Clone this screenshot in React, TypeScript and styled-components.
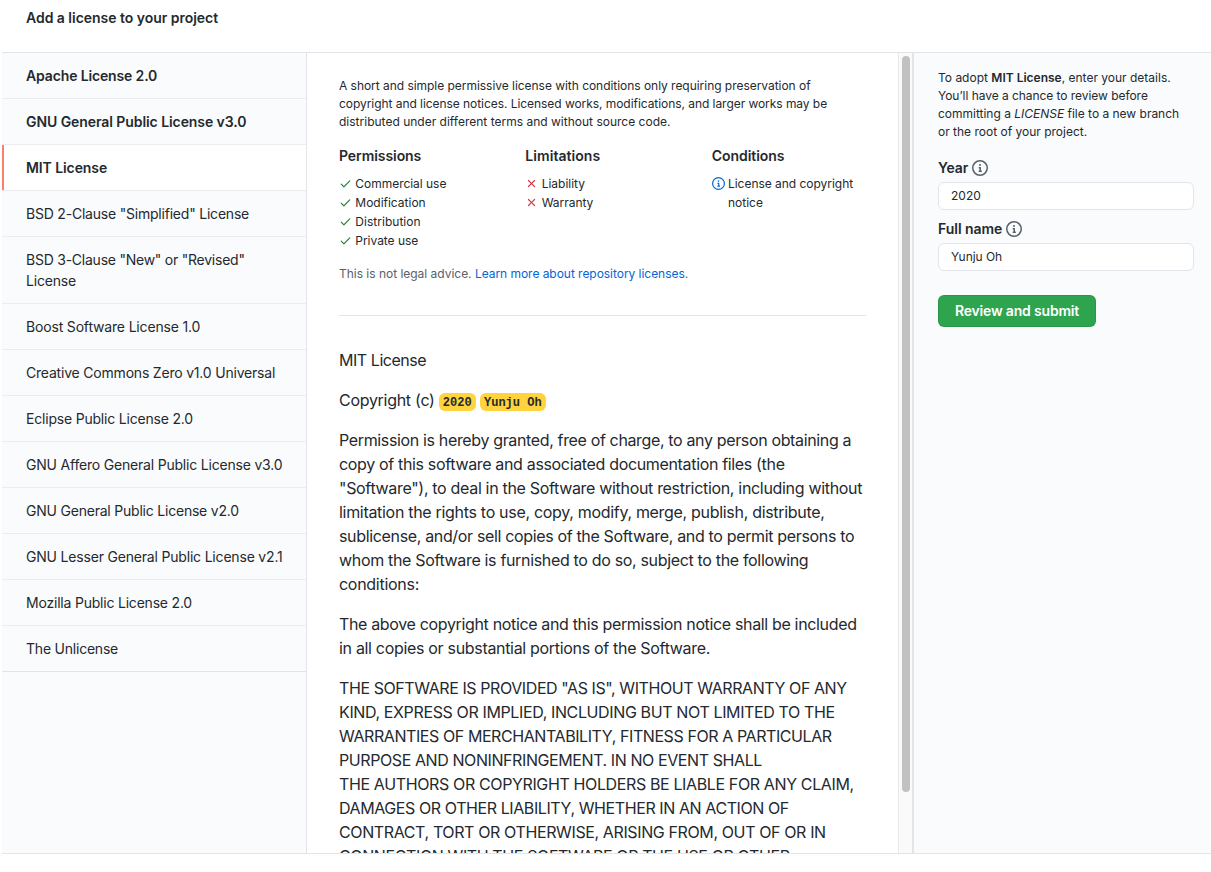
import React from "react";
import styled, { createGlobalStyle, css } from "styled-components";

const colors = {
  text: "#24292e",
  muted: "#586069",
  border: "#e1e4e8",
  subtle: "#fafbfc",
  link: "#0366d6",
  green: "#2ea44f",
  check: "#22863a",
  red: "#d73a49",
  accent: "#f9826c",
  mark: "#ffd33d",
};

const GlobalStyle = createGlobalStyle`
  *, *::before, *::after { box-sizing: border-box; }
  body {
    margin: 0;
    background: #fff;
    color: ${colors.text};
    font-family: Inter, "Liberation Sans", sans-serif;
    font-size: 14px;
    line-height: 21px;
  }
  h1, h2, p, ul { margin: 0; padding: 0; }
  ul { list-style: none; }
`;

/* Text run with its own tracking, in px. */
const Tracked = styled.span<{ $t?: number }>`
  letter-spacing: ${(p) => p.$t ?? 0}px;
`;

const Line = styled(Tracked)`
  display: block;
  white-space: nowrap;
`;

const Strong = styled.strong`
  font-weight: 600;
`;

const Page = styled.div`
  display: flex;
  flex-direction: column;
  height: 872px;
  padding-left: 2px;
  overflow: hidden;
`;

const Header = styled.header`
  height: 52px;
  padding: 7px 24px;
`;

const Title = styled.h1`
  font-size: 14px;
  line-height: 21px;
  font-weight: 600;
`;

const Columns = styled.div`
  display: flex;
  height: 802px;
  border-top: 1px solid ${colors.border};
  border-bottom: 1px solid ${colors.border};
`;

const Sidebar = styled.nav`
  width: 305px;
  flex: none;
  background: ${colors.subtle};
  border-right: 1px solid ${colors.border};
`;

const SidebarItem = styled.a<{ $strong?: boolean; $selected?: boolean }>`
  display: block;
  padding: 12px 20px 12px 24px;
  border-bottom: 1px solid #eaecef;
  font-weight: ${(p) => (p.$strong ? 600 : 400)};
  &:last-child {
    border-bottom-color: ${colors.border};
  }
  ${(p) =>
    p.$selected &&
    css`
      background: #fff;
      box-shadow: inset 2px 0 0 ${colors.accent};
    `}
`;

const Main = styled.main`
  flex: 1;
  min-width: 0;
  padding: 24px 32px 0;
  overflow: hidden;
`;

const Summary = styled.p`
  font-size: 12px;
  line-height: 18px;
`;

const Rules = styled.div`
  display: grid;
  grid-template-columns: repeat(3, 1fr);
  column-gap: 32px;
  margin-top: 15px;
`;

const RuleTitle = styled.h2`
  margin-bottom: 8px;
  font-size: 14px;
  line-height: 20px;
  font-weight: 600;
`;

const RuleItem = styled.li`
  display: flex;
  font-size: 12px;
  line-height: 19px;
`;

const RuleIcon = styled.span`
  display: flex;
  align-items: center;
  flex: none;
  width: 16.3px;
  height: 19px;
`;

const Advice = styled.p`
  margin-top: 15px;
  font-size: 12px;
  line-height: 18px;
  color: ${colors.muted};
`;

const Link = styled.a`
  color: ${colors.link};
`;

const Divider = styled.div`
  height: 1px;
  margin: 32px 0;
  background: ${colors.border};
`;

const LegalText = styled.div`
  display: flex;
  flex-direction: column;
  gap: 16px;
  font-size: 16px;
  line-height: 24px;
`;

const CopyrightLine = styled.p`
  display: flex;
  align-items: center;
  gap: 4px;
`;

const Mark = styled.span`
  height: 18px;
  margin-top: 4px;
  padding: 0 4.2px;
  border-radius: 6px;
  background: ${colors.mark};
  font: 700 12px/20px "Liberation Mono", monospace;
`;

const ScrollTrack = styled.div`
  width: 16px;
  flex: none;
  padding: 3px 3px 0;
  background: #fafafa;
  border-left: 1px solid #e8e8e8;
  border-right: 2px solid #e4e5e8;
`;

const ScrollThumb = styled.div`
  width: 8px;
  height: 736px;
  border-radius: 4px;
  background: #c1c1c1;
`;

const Details = styled.aside`
  width: 297px;
  flex: none;
  padding: 16px 17px 0 24px;
  background: ${colors.subtle};
`;

const Label = styled.label`
  display: flex;
  align-items: center;
  gap: 3.6px;
  height: 21px;
  margin-bottom: 4px;
  color: ${colors.text};
  font-weight: 600;
`;

const Field = styled.div<{ $top: number }>`
  margin-top: ${(p) => p.$top}px;
`;

const Input = styled.div`
  height: 28px;
  padding: 0 12px;
  border: 1px solid ${colors.border};
  border-radius: 6px;
  background: #fff;
  font-size: 12px;
  line-height: 26px;
`;

const SubmitButton = styled.button`
  width: 158px;
  height: 32px;
  margin-top: 24px;
  padding: 0;
  border: 1px solid rgba(27, 31, 35, 0.1);
  border-radius: 6px;
  background: ${colors.green};
  color: #fff;
  font-family: inherit;
  font-size: 14px;
  line-height: 20px;
  font-weight: 600;
  white-space: nowrap;
`;

const iconPaths = {
  check:
    "M13.78 4.22a.75.75 0 010 1.06l-7.25 7.25a.75.75 0 01-1.06 0L2.22 9.28a.75.75 0 011.06-1.06L6 10.94l6.72-6.72a.75.75 0 011.06 0z",
  x: "M3.72 3.72a.75.75 0 011.06 0L8 6.94l3.22-3.22a.75.75 0 111.06 1.06L9.06 8l3.22 3.22a.75.75 0 11-1.06 1.06L8 9.06l-3.22 3.22a.75.75 0 01-1.06-1.06L6.94 8 3.72 4.78a.75.75 0 010-1.06z",
  info: "M8 1.5a6.5 6.5 0 100 13 6.5 6.5 0 000-13zM0 8a8 8 0 1116 0A8 8 0 010 8zm6.5-.25A.75.75 0 017.25 7h1a.75.75 0 01.75.75v2.75h.25a.75.75 0 010 1.5h-2a.75.75 0 010-1.5h.25v-2h-.25a.75.75 0 01-.75-.75zM8 6a1 1 0 100-2 1 1 0 000 2z",
};

type IconName = keyof typeof iconPaths;

const Icon = ({ name, size, color }: { name: IconName; size: number; color: string }) => (
  <svg width={size} height={size} viewBox="0 0 16 16" fill={color} aria-hidden="true">
    <path fillRule="evenodd" d={iconPaths[name]} />
  </svg>
);

type TextLine = [text: string, tracking: number];

const licenses: { lines: TextLine[]; strong?: boolean; selected?: boolean }[] = [
  { lines: [["Apache License 2.0", -0.14]], strong: true },
  { lines: [["GNU General Public License v3.0", -0.075]], strong: true },
  { lines: [["MIT License", -0.09]], strong: true, selected: true },
  { lines: [['BSD 2-Clause "Simplified" License', -0.21]] },
  { lines: [['BSD 3-Clause "New" or "Revised"', -0.24], ["License", -0.2]] },
  { lines: [["Boost Software License 1.0", -0.17]] },
  { lines: [["Creative Commons Zero v1.0 Universal", -0.2]] },
  { lines: [["Eclipse Public License 2.0", -0.2]] },
  { lines: [["GNU Affero General Public License v3.0", -0.2]] },
  { lines: [["GNU General Public License v2.0", -0.215]] },
  { lines: [["GNU Lesser General Public License v2.1", -0.19]] },
  { lines: [["Mozilla Public License 2.0", -0.205]] },
  { lines: [["The Unlicense", -0.22]] },
];

const summary: TextLine[] = [
  ["A short and simple permissive license with conditions only requiring preservation of", -0.037],
  ["copyright and license notices. Licensed works, modifications, and larger works may be", -0.055],
  ["distributed under different terms and without source code.", 0.005],
];

const rules: { title: TextLine; icon: IconName; color: string; items: TextLine[][] }[] = [
  {
    title: ["Permissions", -0.07],
    icon: "check",
    color: colors.check,
    items: [
      [["Commercial use", -0.03]],
      [["Modification", -0.01]],
      [["Distribution", 0.03]],
      [["Private use", -0.03]],
    ],
  },
  {
    title: ["Limitations", 0.05],
    icon: "x",
    color: colors.red,
    items: [[["Liability", 0]], [["Warranty", -0.03]]],
  },
  {
    title: ["Conditions", -0.04],
    icon: "info",
    color: colors.link,
    items: [
      [
        ["License and copyright", -0.03],
        ["notice", 0],
      ],
    ],
  },
];

const paragraphs: TextLine[][] = [
  [
    ["Permission is hereby granted, free of charge, to any person obtaining a", -0.354],
    ["copy of this software and associated documentation files (the", -0.338],
    ['"Software"), to deal in the Software without restriction, including without', -0.318],
    ["limitation the rights to use, copy, modify, merge, publish, distribute,", -0.305],
    ["sublicense, and/or sell copies of the Software, and to permit persons to", -0.342],
    ["whom the Software is furnished to do so, subject to the following", -0.332],
    ["conditions:", -0.28],
  ],
  [
    ["The above copyright notice and this permission notice shall be included", -0.346],
    ["in all copies or substantial portions of the Software.", -0.315],
  ],
  [
    ['THE SOFTWARE IS PROVIDED "AS IS", WITHOUT WARRANTY OF ANY', -0.418],
    ["KIND, EXPRESS OR IMPLIED, INCLUDING BUT NOT LIMITED TO THE", -0.372],
    ["WARRANTIES OF MERCHANTABILITY, FITNESS FOR A PARTICULAR", -0.42],
    ["PURPOSE AND NONINFRINGEMENT. IN NO EVENT SHALL", -0.412],
    ["THE AUTHORS OR COPYRIGHT HOLDERS BE LIABLE FOR ANY CLAIM,", -0.37],
    ["DAMAGES OR OTHER LIABILITY, WHETHER IN AN ACTION OF", -0.412],
    ["CONTRACT, TORT OR OTHERWISE, ARISING FROM, OUT OF OR IN", -0.38],
    ["CONNECTION WITH THE SOFTWARE OR THE USE OR OTHER", -0.385],
  ],
];

const Lines = ({ lines }: { lines: TextLine[] }) => (
  <>
    {lines.map(([text, tracking]) => (
      <Line key={text} $t={tracking}>
        {text}
      </Line>
    ))}
  </>
);

export default function App() {
  return (
    <>
      <GlobalStyle />
      <Page>
        <Header>
          <Title>
            <Line $t={-0.03}>Add a license to your project</Line>
          </Title>
        </Header>
        <Columns>
          <Sidebar>
            {licenses.map((item) => (
              <SidebarItem key={item.lines[0][0]} $strong={item.strong} $selected={item.selected}>
                <Lines lines={item.lines} />
              </SidebarItem>
            ))}
          </Sidebar>
          <Main>
            <Summary>
              <Lines lines={summary} />
            </Summary>
            <Rules>
              {rules.map((rule) => (
                <section key={rule.title[0]}>
                  <RuleTitle>
                    <Lines lines={[rule.title]} />
                  </RuleTitle>
                  <ul>
                    {rule.items.map((lines) => (
                      <RuleItem key={lines[0][0]}>
                        <RuleIcon>
                          <Icon name={rule.icon} size={13} color={rule.color} />
                        </RuleIcon>
                        <div>
                          <Lines lines={lines} />
                        </div>
                      </RuleItem>
                    ))}
                  </ul>
                </section>
              ))}
            </Rules>
            <Advice>
              <Tracked $t={-0.02}>This is not legal advice. </Tracked>
              <Link>
                <Tracked $t={-0.04}>Learn more about repository licenses</Tracked>
              </Link>
              .
            </Advice>
            <Divider />
            <LegalText>
              <p>
                <Line $t={-0.45}>MIT License</Line>
              </p>
              <CopyrightLine>
                <Line $t={-0.29}>Copyright (c)</Line>
                <Mark>2020</Mark>
                <Mark>Yunju Oh</Mark>
              </CopyrightLine>
              {paragraphs.map((lines) => (
                <p key={lines[0][0]}>
                  <Lines lines={lines} />
                </p>
              ))}
            </LegalText>
          </Main>
          <ScrollTrack>
            <ScrollThumb />
          </ScrollTrack>
          <Details>
            <Summary>
              <Line>
                To adopt <Strong>MIT License</Strong>, enter your details.
              </Line>
              <Line $t={-0.05}>You’ll have a chance to review before</Line>
              <Line $t={-0.01}>
                committing a <i>LICENSE</i> file to a new branch
              </Line>
              <Line>or the root of your project.</Line>
            </Summary>
            <Field $top={16}>
              <Label>
                <Tracked $t={-0.13}>Year</Tracked>
                <Icon name="info" size={16} color={colors.muted} />
              </Label>
              <Input>2020</Input>
            </Field>
            <Field $top={8}>
              <Label>
                <Tracked $t={-0.04}>Full name</Tracked>
                <Icon name="info" size={16} color={colors.muted} />
              </Label>
              <Input>
                <Tracked $t={-0.05}>Yunju Oh</Tracked>
              </Input>
            </Field>
            <SubmitButton>
              <Tracked $t={-0.18}>Review and submit</Tracked>
            </SubmitButton>
          </Details>
        </Columns>
      </Page>
    </>
  );
}
